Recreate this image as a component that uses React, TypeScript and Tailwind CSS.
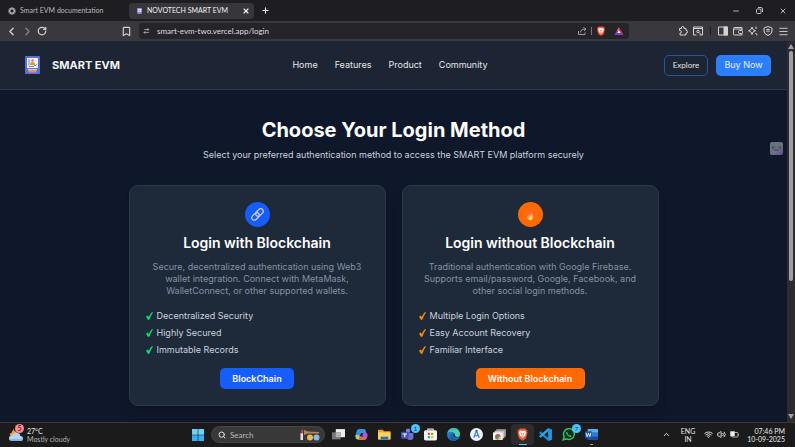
import React from "react";
import {
  Bookmark,
  ChevronLeft,
  ChevronRight,
  ChevronUp,
  Menu,
  Minus,
  Plus,
  RotateCw,
  Search,
  Settings2,
  Volume2,
  Wifi,
  X,
} from "lucide-react";

function BraveLion({ size }: { size: number }) {
  return (
    <svg width={size} height={size} viewBox="0 0 24 24" aria-hidden="true">
      <path d="M7 1h10l2 2 2.500 1-1 3 .8 2-3 10.500L12 23.500 5.700 19.500 2.700 9l.8-2-1-3L5 3z" fill="#fb542b" />
      <path d="M12 5.500l4-1 3 4-2 4 .5 2-3 1.500-2.500 3-2.500-3-3-1.500.5-2-2-4 3-4z" fill="#fff" />
      <path d="M8 9l3 1.200-.6 3.300M16 9l-3 1.200.6 3.300M10 16l2-1 2 1" fill="none" stroke="#fb542b" strokeWidth="1.300" />
    </svg>
  );
}

function MachineLogo({ className }: { className: string }) {
  return (
    <svg viewBox="0 0 15 18" className={className} aria-hidden="true">
      <rect width="15" height="18" rx="1" fill="#5a70d4" />
      <path d="M2 2h11v10H2z" fill="#f3f5fd" />
      <path d="M4 3v6.500M4 10.500h5" fill="none" stroke="#5566a8" strokeWidth=".8" />
      <circle cx="7.500" cy="4.500" r="1.300" fill="#e5763e" />
      <path d="M5 9q0-3 2.500-3T10 9z" fill="#f08b4d" />
      <path d="M9 9l1 1 2-2.200" fill="none" stroke="#3dab67" strokeWidth=".9" />
      <path d="M3 13h9v1H3z" fill="#c8d3f7" />
      <path d="M3 14h9l-1 2.500H4z" fill="#f28c5b" />
    </svg>
  );
}

function LineIcon({ children }: { children: React.ReactNode }) {
  return (
    <svg viewBox="0 0 20 20" className="size-[10px]" fill="none" stroke="currentColor" strokeWidth="2" strokeLinejoin="round" aria-hidden="true">
      {children}
    </svg>
  );
}

function TabStrip() {
  return (
    <div className="flex h-[21px] shrink-0 items-center bg-[#1e1d22] text-[7px] text-[#b9b9be]">
      <div className="flex w-[129px] items-center gap-1 pl-2">
        <svg viewBox="0 0 16 16" className="size-2" aria-hidden="true">
          <g fill="none" stroke="#c9c9cd" strokeWidth="1.300">
            <ellipse cx="8" cy="8" rx="7" ry="4" transform="rotate(30 8 8)" />
            <ellipse cx="8" cy="8" rx="7" ry="4" transform="rotate(90 8 8)" />
            <ellipse cx="8" cy="8" rx="7" ry="4" transform="rotate(150 8 8)" />
          </g>
        </svg>
        <span>Smart EVM documentation</span>
      </div>
      <div className="flex h-4 w-[125px] items-center rounded bg-[#37363b] pl-2 pr-1 text-[#f1f1f3]">
        <MachineLogo className="h-[6px] w-[5px]" />
        <span className="ml-[5px] grow">NOVOTECH SMART EVM</span>
        <button aria-label="Close tab"><X size={8} strokeWidth={3.5} /></button>
      </div>
      <button aria-label="New tab" className="ml-[7px] text-[#e8e8ea]"><Plus size={9} strokeWidth={3} /></button>
      <div className="ml-auto flex items-center gap-4 pr-2 text-[#d0d0d3]">
        <button aria-label="Minimize"><Minus size={8} strokeWidth={2.5} /></button>
        <button aria-label="Restore">
          <svg viewBox="0 0 14 14" className="size-[7px]" fill="none" stroke="currentColor" strokeWidth="1.800" aria-hidden="true">
            <rect x="1" y="4" width="9" height="9" rx="2" />
            <path d="M4 1h6q3 0 3 3v6" />
          </svg>
        </button>
        <button aria-label="Close"><X size={8} strokeWidth={2.5} /></button>
      </div>
    </div>
  );
}

function Toolbar() {
  return (
    <div className="flex h-5 shrink-0 items-center bg-[#39383d] text-[#d3d3d6]">
      <div className="flex w-[121px] items-center gap-[3px] pl-[5px]">
        <button aria-label="Back"><ChevronLeft size={13} strokeWidth={2.5} /></button>
        <button aria-label="Forward" className="text-[#858489]"><ChevronRight size={13} strokeWidth={2.5} /></button>
        <button aria-label="Reload"><RotateCw size={10} strokeWidth={3} /></button>
      </div>
      <button aria-label="Bookmark" className="mr-[7px]"><Bookmark size={11} strokeWidth={2.5} /></button>
      <div className="flex h-4 grow items-center rounded bg-[#252429] pl-1 pr-[5px]">
        <Settings2 size={8} className="-scale-x-100" />
        <input
          aria-label="Address"
          defaultValue="smart-evm-two.vercel.app/login"
          className="ml-[7px] w-full min-w-0 grow bg-transparent text-[8px] text-[#dedee2] outline-none"
        />
        <button aria-label="Share">
          <svg viewBox="0 0 18 16" className="h-2 w-[9px]" fill="none" stroke="#a9a9ad" strokeWidth="1.800" aria-hidden="true">
            <path d="M1 8v7h13v-4M5 11q0-7 10-7M11 1l5 3-4 4" />
          </svg>
        </button>
        <span className="mx-1 h-2 w-px bg-[#77767b]" />
        <button aria-label="Shields" className="mr-2"><BraveLion size={10} /></button>
        <button aria-label="Rewards">
          <svg viewBox="0 0 20 17" className="h-2 w-[10px]" aria-hidden="true">
            <path d="M10 0L5 8l5 3z" fill="#ff5a2f" />
            <path d="M5 8L0 17h20l-5-4z" fill="#7c3bc0" />
            <path d="M10 0l10 17-7-4-3-5z" fill="#d0286e" />
            <path d="M10 7l3.500 6h-7z" fill="#fff" />
          </svg>
        </button>
      </div>
      <div className="ml-[49px] flex items-center gap-[5px] pr-[6px]">
        <button aria-label="Extensions">
          <LineIcon>
            <path d="M3 5h4q-1-4 2.500-4T12 5h4v4q3-1 3 2.500T16 14v4H4v-4q3 0 3-2.500T3 9z" />
          </LineIcon>
        </button>
        <button aria-label="Search tabs">
          <LineIcon>
            <path d="M1 2h18v16h-6M7 18H1V2M1 5h18" />
            <circle cx="10" cy="11" r="2.500" />
            <path d="M12 13l4 4" />
          </LineIcon>
        </button>
        <span className="mx-[2px] h-2 w-px bg-[#1c1b20]" />
        <button aria-label="Sidebar">
          <LineIcon>
            <rect x="1" y="2" width="18" height="16" />
            <path d="M12 2h7v16h-7z" fill="currentColor" />
          </LineIcon>
        </button>
        <button aria-label="Wallet">
          <LineIcon>
            <path d="M18 6V3H3q-2 0-2 2v11q0 2 2 2h15v-3M1 6h17v3" />
            <rect x="11" y="9" width="8" height="6" rx="2" />
          </LineIcon>
        </button>
        <button aria-label="Assistant">
          <LineIcon>
            <path d="M8 2l2 5 5 2.500-5 2.500-2 5-2-5-5-2.500L6 7zM16 1v5M15 14l1.500 2 2 1-2 1" />
          </LineIcon>
        </button>
        <button aria-label="VPN">
          <LineIcon>
            <path d="M10 1l8 3v6q0 6-8 9-8-3-8-9V4z" />
            <path d="M6 8q4-3 8 0M7 11q3-2 6 0M10 14v1" />
          </LineIcon>
        </button>
        <button aria-label="Menu"><Menu size={11} strokeWidth={2} /></button>
      </div>
    </div>
  );
}

function SiteHeader() {
  return (
    <header className="grid h-[49px] shrink-0 grid-cols-[1fr_auto_1fr] items-center border-b border-[#2c374a] bg-[#1d2433] pl-[25px] pr-4">
      <div className="flex items-center gap-3">
        <MachineLogo className="h-[18px] w-[15px]" />
        <span className="text-[11px] font-bold text-[#f3f4f6]">SMART EVM</span>
      </div>
      <nav className="mr-4 flex gap-[17px] text-[9px] text-[#e5e7eb]">
        <a href="#home">Home</a>
        <a href="#features">Features</a>
        <a href="#product">Product</a>
        <a href="#community">Community</a>
      </nav>
      <div className="flex justify-end gap-2">
        <button className="h-[21px] w-11 rounded-[5px] border border-[#28569c] font-[Lato,sans-serif] text-[8px] text-[#e5e7eb]">Explore</button>
        <button className="h-[21px] w-[55px] rounded-[5px] bg-[#2b7fff] text-[9px] text-[#e7efff]">Buy Now</button>
      </div>
    </header>
  );
}

function LinkIcon() {
  return (
    <svg viewBox="0 0 26 26" className="size-[13px]" aria-hidden="true">
      <g fill="none" stroke="#c9cbdd" strokeWidth="2.600" transform="rotate(-45 13 13)">
        <rect x="-1" y="8" width="17" height="10" rx="5" />
        <rect x="10" y="8" width="17" height="10" rx="5" />
      </g>
    </svg>
  );
}

function FlameIcon() {
  return (
    <svg viewBox="0 0 24 24" className="size-[13px]" aria-hidden="true">
      <path d="M12 1c2 3 7 7 7 14 0 5-3 8-7 8s-8-3-8-8c0-4 2-5 2-9 2 1 3 2 3 4 3-2 4-5 3-9z" fill="#f4694a" />
      <path d="M13 8c1 3 4 5 4 9 0 3-2 6-5 6s-6-2-6-5 2-4 3-6l2 2c2-1 2-3 2-6z" fill="#ffa03b" />
      <path d="M13 14c2 2 2 3 2 5s-1 3-3 3-3-1-3-3 3-2 4-5z" fill="#ffe36c" />
    </svg>
  );
}

type MethodCardProps = {
  icon: React.ReactNode;
  title: string;
  lines: string[];
  features: string[];
  action: string;
  badgeClass: string;
  tickClass: string;
  buttonClass: string;
};

function MethodCard({ icon, title, lines, features, action, badgeClass, tickClass, buttonClass }: MethodCardProps) {
  return (
    <section className="flex flex-col items-center rounded-[9px] border border-[#2d394b] bg-[#1e293a] p-4 shadow-lg">
      <div className={"flex size-[25px] items-center justify-center rounded-full " + badgeClass}>{icon}</div>
      <h2 className="mt-2 text-[14px] leading-4 font-semibold whitespace-nowrap text-white">{title}</h2>
      <p className="mt-[10px] text-center text-[9px] leading-3 whitespace-nowrap text-[#8592a6]">
        {lines.map((line) => (
          <span key={line} className="block">{line}</span>
        ))}
      </p>
      <ul className="mt-3 flex flex-col gap-1 self-stretch text-[9px] leading-[13px] text-[#cbd2dd]">
        {features.map((feature) => (
          <li key={feature} className="flex items-center gap-1">
            <svg viewBox="0 0 14 16" className={"h-2 w-[7px] " + tickClass} aria-hidden="true">
              <path d="M0 9l4-2 1.500 3Q8 4 12 0l2 1Q9 8 7 15l-3 1z" fill="currentColor" />
            </svg>
            {feature}
          </li>
        ))}
      </ul>
      <button className={"mt-3 h-[21px] rounded-[5px] text-[9px] font-semibold text-white " + buttonClass}>{action}</button>
    </section>
  );
}

function LoginPage() {
  return (
    <main className="grow bg-[#0f172a] pt-7">
      <h1 className="text-center text-[20px] leading-6 font-bold text-white">Choose Your Login Method</h1>
      <p className="mt-[7px] text-center text-[9px] leading-3 text-[#cbd2dd]">
        Select your preferred authentication method to access the SMART EVM platform securely
      </p>
      <div className="mx-auto mt-6 grid max-w-[530px] grid-cols-2 gap-4">
        <MethodCard
          icon={<LinkIcon />}
          title="Login with Blockchain"
          lines={["Secure, decentralized authentication using Web3", "wallet integration. Connect with MetaMask,", "WalletConnect, or other supported wallets."]}
          features={["Decentralized Security", "Highly Secured", "Immutable Records"]}
          action="BlockChain"
          badgeClass="bg-[#155dfc]"
          tickClass="text-[#05df72]"
          buttonClass="w-[74px] bg-[#155dfc]"
        />
        <MethodCard
          icon={<FlameIcon />}
          title="Login without Blockchain"
          lines={["Traditional authentication with Google Firebase.", "Supports email/password, Google, Facebook, and", "other social login methods."]}
          features={["Multiple Login Options", "Easy Account Recovery", "Familiar Interface"]}
          action="Without Blockchain"
          badgeClass="bg-[#ff6900]"
          tickClass="text-[#ff8904]"
          buttonClass="w-[109px] bg-[#ff6900]"
        />
      </div>
    </main>
  );
}

function ScrollTrack() {
  return (
    <div className="flex w-2 shrink-0 flex-col items-center bg-[#2c2c2c] py-[3px]">
      <svg viewBox="0 0 6 5" className="h-[5px] w-[6px] shrink-0" aria-hidden="true"><path d="M3 0l3 5H0z" fill="#a0a0a0" /></svg>
      <span className="mt-[2px] h-[230px] w-1 rounded-full bg-[#a0a0a0]" />
      <svg viewBox="0 0 6 5" className="mt-auto h-[5px] w-[6px] shrink-0" aria-hidden="true"><path d="M3 5l3-5H0z" fill="#a0a0a0" /></svg>
    </div>
  );
}

function CountBadge({ children }: { children: React.ReactNode }) {
  return (
    <span className="absolute top-0 -right-px flex size-[9px] items-center justify-center rounded-full bg-[#4cc2ff] text-[6px] leading-none text-[#12334a]">
      {children}
    </span>
  );
}

const apps: { name: string; art: React.ReactNode; badge?: string; active?: boolean; open?: boolean }[] = [
  {
    name: "Task view",
    art: (
      <>
        <path d="M7 2h17v15H7z" fill="#eee" />
        <path d="M0 8h16v13H0z" fill="#777" />
        <path d="M7 8h9v9H7z" fill="#b4b4b4" />
      </>
    ),
  },
  {
    name: "Copilot",
    art: (
      <>
        <path d="M9 2h8q2 0 3 4l1 3h-6l-3 9q-1 3-4 3H5q-5 0-4-6l2-8q1-5 6-5z" fill="#2a9be8" />
        <path d="M3 7q1-5 6-5h5q-3 1-4 5l-3 8H1z" fill="#2f8fe0" />
        <path d="M15 9h5q4 0 3 6l-1 3q-1 4-6 4H9q3 0 4-5z" fill="#c14ddb" />
        <path d="M1 13h6q1 7 4 8H6q-5 0-5-8z" fill="#d8c93b" />
        <path d="M9 17h13q-1 5-6 5H9q-2-1-2-3z" fill="#f0663e" />
        <path d="M11 9h4l-2 6H9z" fill="#1b1b1b" />
      </>
    ),
  },
  {
    name: "File Explorer",
    art: (
      <>
        <path d="M0 3h9l2 3h12v15H0z" fill="#e8a51d" />
        <path d="M0 8h23v13H0z" fill="#ffd35a" />
        <path d="M5 16h14v5H5z" fill="#1a75c7" />
      </>
    ),
  },
  {
    name: "Teams",
    badge: "1",
    art: (
      <>
        <circle cx="13" cy="5" r="4" fill="#7b83eb" />
        <path d="M9 9h14v8q0 5-6 5t-8-5z" fill="#6972d8" />
        <rect y="7" width="14" height="13" rx="2" fill="#4650b8" />
        <path d="M3 11h8M7 11v6" stroke="#fff" strokeWidth="2" />
      </>
    ),
  },
  {
    name: "Store",
    art: (
      <>
        <path d="M7 5V2h10v3" fill="none" stroke="#ddd" strokeWidth="2" />
        <rect y="4" width="24" height="19" rx="3" fill="#f4f4f4" />
        <path d="M7 9h4v4H7z" fill="#f25022" />
        <path d="M13 9h4v4h-4z" fill="#7fba00" />
        <path d="M7 15h4v4H7z" fill="#00a4ef" />
        <path d="M13 15h4v4h-4z" fill="#ffb900" />
      </>
    ),
  },
  {
    name: "Edge",
    art: (
      <>
        <circle cx="12" cy="12" r="12" fill="#1680cf" />
        <path d="M1 9C3 2 9 0 12 0c8 0 12 6 12 11 0 4-4 6-8 5-3-1-1-2-1-4 0-4-9-7-14-3z" fill="#4bd2a0" />
        <path d="M1 9C3 2 9 0 12 0c5 0 8 2 10 5C15 2 6 2 1 9z" fill="#38bbdd" />
        <path d="M10 10q-3 8 6 10 3 0 5-1-5 6-12 4-7-9 1-13z" fill="#1459a0" />
        <path d="M14 11q1 2 0 3 1 3 6 3-3 1-6 0-4-2-2-6z" fill="#1b1b1b" />
      </>
    ),
  },
  {
    name: "Studio",
    art: (
      <>
        <circle cx="12" cy="12" r="12" fill="#f0f4fb" />
        <path d="M12 5L7 18M12 5l5 13M7 14h10" fill="none" stroke="#4285e8" strokeWidth="2.500" />
        <circle cx="12" cy="5" r="2" fill="#38567e" />
      </>
    ),
  },
  {
    name: "Capture",
    art: (
      <>
        <path d="M6 2h18v14H6z" fill="#8f8f8f" />
        <path d="M3 5h18v14H3z" fill="#c4c4c4" />
        <path d="M0 8h18v14H0z" fill="#f2f2f2" />
        <circle cx="9" cy="16" r="5" fill="#dc473c" />
        <path d="M9 16l5-1a5 5 0 01-4 6z" fill="#f4bf32" />
        <path d="M9 16l-5-1a5 5 0 005 6z" fill="#35a357" />
        <circle cx="9" cy="16" r="2" fill="#3f82e8" />
      </>
    ),
  },
  { name: "Brave", active: true, art: <BraveLion size={24} /> },
  {
    name: "Code",
    art: (
      <>
        <path d="M17 0l7 3v18l-7 3L0 9l3-3 14 12z" fill="#1684ce" />
        <path d="M17 0v6L3 18l-3-3z" fill="#2aa8ee" />
        <path d="M17 0l7 3v18l-7 3z" fill="#2493db" />
      </>
    ),
  },
  {
    name: "WhatsApp",
    badge: "7",
    art: (
      <>
        <path d="M2 22l2-6a10 10 0 114 4z" fill="#182c20" stroke="#26cf68" strokeWidth="2.500" />
        <path d="M8 7q-2 3 2 7t7 2l-1-3-3 1-3-3 1-2z" fill="#26cf68" />
      </>
    ),
  },
  {
    name: "Word",
    open: true,
    art: (
      <>
        <path d="M5 2h19v20H5z" fill="#2b7cd3" />
        <path d="M5 2h19v6H5z" fill="#54b4f2" />
        <path d="M5 16h19v6H5z" fill="#174b9b" />
        <rect y="6" width="13" height="13" rx="1" fill="#1856b3" />
        <path d="M2 9l2 7 2.500-6L9 16l2-7" fill="none" stroke="#fff" strokeWidth="1.600" />
      </>
    ),
  },
];

function Taskbar() {
  return (
    <footer className="grid h-[25px] shrink-0 grid-cols-[1fr_auto_1fr] items-center border-t border-[#38383a] bg-[#1b1b1b] pb-px text-[7px] leading-2 text-[#e8e8e8]">
      <div className="flex items-center gap-1 pl-[9px]">
        <div className="relative">
          <svg viewBox="0 0 26 26" className="size-[14px]" aria-hidden="true">
            <path d="M8 2l2 4 5 1-3 4 1 6H4l-3-6 4-2z" fill="#f5a936" />
            <path d="M6 24q-6 0-6-5t6-5q3-6 9-5t6 6q5 0 5 5t-6 4z" fill="#b5d3fb" />
            <path d="M2 21h23q-1 3-5 3H6q-3 0-4-3z" fill="#7eaeea" />
          </svg>
          <span className="absolute -top-1 -right-px flex size-[9px] items-center justify-center rounded-full bg-[#ff8a94] text-[7px] leading-none text-[#3d1016]">5</span>
        </div>
        <div>
          <div>27°C</div>
          <div className="text-[#b5b5b5]">Mostly cloudy</div>
        </div>
      </div>
      <div className="mr-[6px] flex items-center">
        <button aria-label="Start" className="flex w-[23px] justify-center">
          <svg viewBox="0 0 12 12" className="size-3" aria-hidden="true">
            <path d="M0 0h5.700v5.700H0zM6.300 0H12v5.700H6.300z" fill="#6bd3fa" />
            <path d="M0 6.300h5.700V12H0zM6.300 6.300H12V12H6.300z" fill="#31b2f4" />
          </svg>
        </button>
        <label className="mx-[2px] flex h-[17px] w-[114px] items-center rounded-full border border-[#454545] bg-[#383838] pl-[6px] pr-1">
          <Search size={8} strokeWidth={3} className="shrink-0" />
          <input aria-label="Search" placeholder="Search" className="ml-1 w-full min-w-0 bg-transparent text-[8px] outline-none placeholder:text-[#bcbcbc]" />
          <svg viewBox="0 0 40 24" className="h-3 w-5 shrink-0" aria-hidden="true">
            <path d="M2 8l3-7v7h1v14H1V8z" fill="#e9e2df" />
            <path d="M2 2l3-1v8H2z" fill="#d42f2d" />
            <path d="M8 2l8 3 22 1v3H16l-8 3z" fill="#b78755" />
            <circle cx="20" cy="17" r="6" fill="#e9b95e" />
            <circle cx="33" cy="17" r="6" fill="#83bce6" />
          </svg>
        </label>
        {apps.map((app) => (
          <button
            key={app.name}
            aria-label={app.name}
            className={"relative flex h-[21px] w-[23px] items-center justify-center rounded-sm " + (app.active ? "bg-[#2c2c2c]" : "")}
          >
            <svg viewBox="0 0 24 24" className="size-[13px]" aria-hidden="true">{app.art}</svg>
            {app.badge && <CountBadge>{app.badge}</CountBadge>}
            {app.active && <span className="absolute bottom-0 h-px w-2 bg-[#4cc2ff]" />}
            {app.open && <span className="absolute bottom-0 h-px w-[3px] bg-[#a0a0a0]" />}
          </button>
        ))}
      </div>
      <div className="flex items-center justify-end pr-[10px]">
        <ChevronUp size={9} strokeWidth={2.5} />
        <div className="ml-[10px] text-center">
          <div>ENG</div>
          <div>IN</div>
        </div>
        <div className="mr-2 ml-[9px] flex gap-1">
          <Wifi size={9} strokeWidth={2.5} />
          <Volume2 size={9} strokeWidth={2.5} />
          <svg viewBox="0 0 18 18" className="size-[9px]" aria-hidden="true">
            <rect x="3" y="5" width="13" height="9" rx="2" fill="none" stroke="#ddd" strokeWidth="1.500" />
            <path d="M1 3h8v9H1zM17 8v4" fill="#eee" stroke="#ddd" />
          </svg>
        </div>
        <div className="text-right">
          <div>07:46 PM</div>
          <div>10-09-2025</div>
        </div>
      </div>
    </footer>
  );
}

export default function App() {
  return (
    <div className="flex h-screen flex-col overflow-hidden bg-[#0f172a] font-[Lato,sans-serif]">
      <TabStrip />
      <Toolbar />
      <div className="relative flex min-h-0 grow">
        <div className="flex min-w-0 grow flex-col font-[Inter,sans-serif]">
          <SiteHeader />
          <LoginPage />
        </div>
        <button aria-label="Assistant overlay" className="absolute top-[101px] right-3 flex size-[13px] items-center justify-center rounded-[2px] bg-linear-to-br from-[#6a7180] from-60% to-[#65488e]">
          <svg viewBox="0 0 12 8" className="h-[6px] w-[9px]" aria-hidden="true">
            <path d="M1 0v3l2 2M11 0v3L9 5M4 5q2 2 4 0M4 1v1M8 1v1" fill="none" stroke="#272e40" strokeWidth="1.100" />
          </svg>
        </button>
        <ScrollTrack />
      </div>
      <Taskbar />
    </div>
  );
}
